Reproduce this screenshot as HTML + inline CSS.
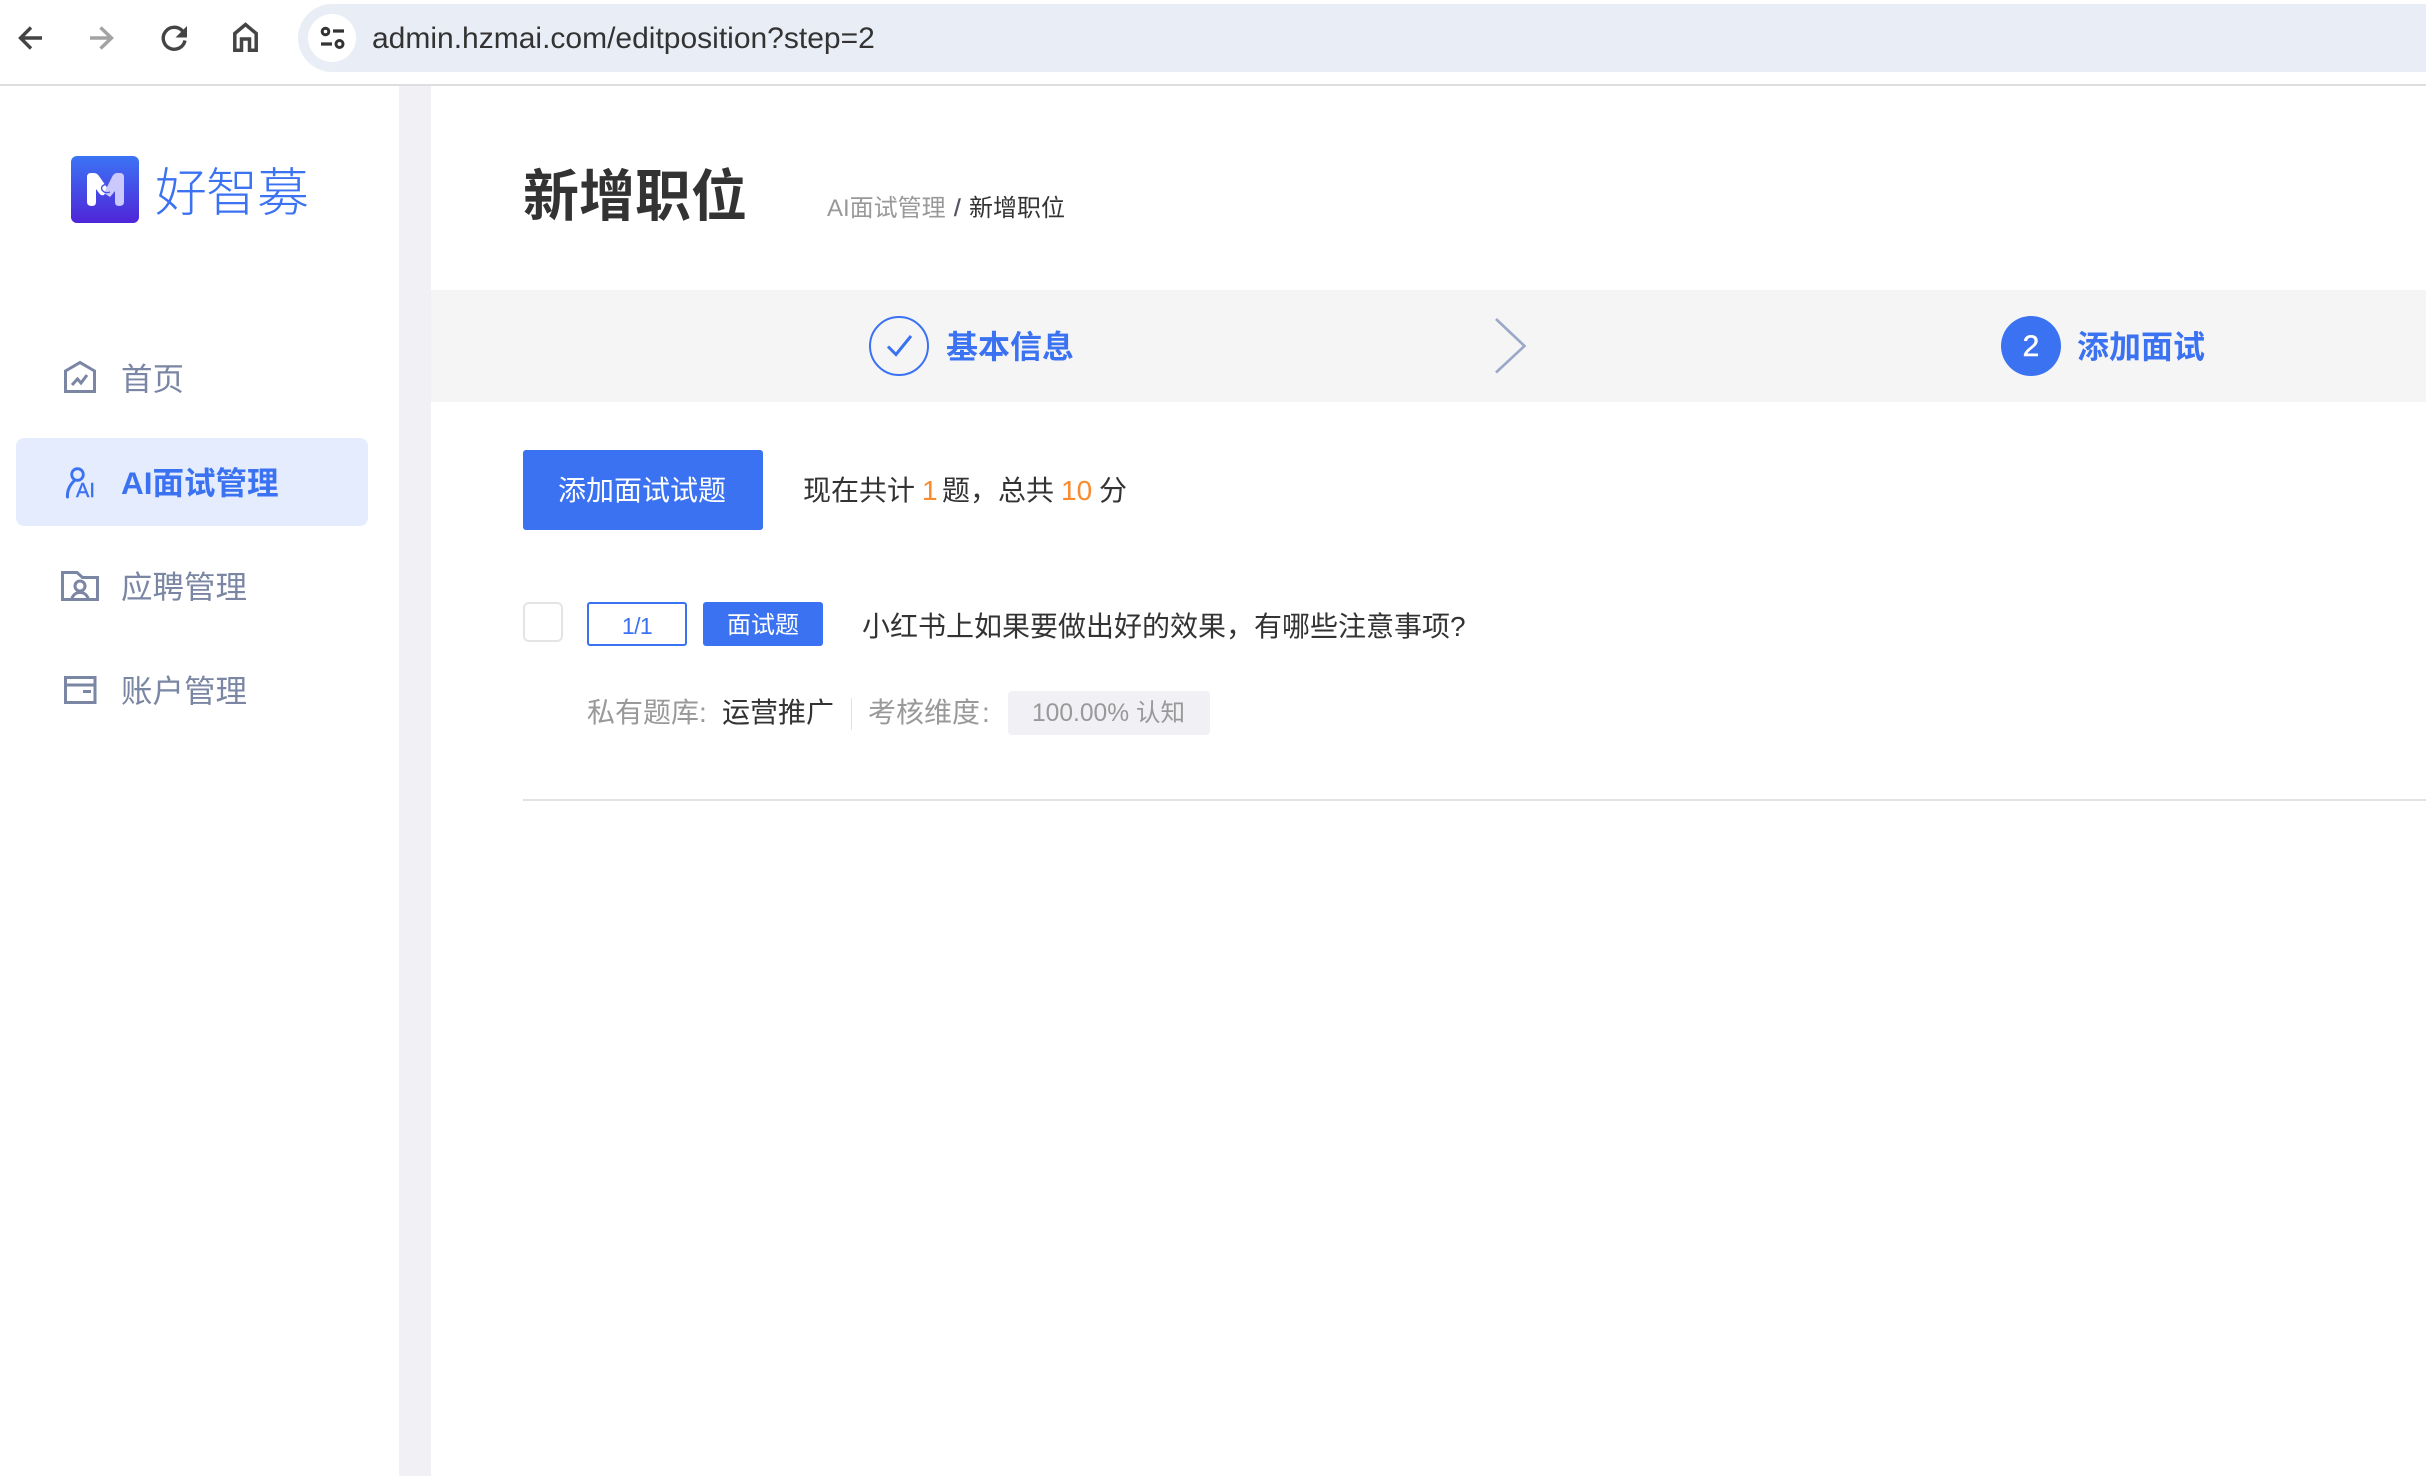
<!DOCTYPE html>
<html lang="zh-CN">
<head>
<meta charset="utf-8">
<title>新增职位</title>
<style>
html,body{margin:0;padding:0;width:2426px;height:1476px;overflow:hidden;background:#fff}
body{position:relative;font-family:"Liberation Sans","Noto Sans CJK SC",sans-serif;color:#333}
.b{position:absolute}
.t{position:absolute;white-space:nowrap;line-height:1}
svg{position:absolute;left:0;top:0}
</style>
</head>
<body>
<!-- browser chrome -->
<div class="b" style="left:298px;top:4px;width:2200px;height:68px;border-radius:34px;background:#e9edf6"></div>
<div class="b" style="left:308px;top:14px;width:48px;height:48px;border-radius:50%;background:#fff"></div>
<div class="b" style="left:0;top:84px;width:2426px;height:2px;background:#dedede"></div>
<div class="t" style="left:372px;top:24px;font-size:30px;color:#333">admin.hzmai.com/editposition?step=2</div>

<!-- layout -->
<div class="b" style="left:399px;top:86px;width:32px;height:1390px;background:#f0f0f5"></div>

<!-- logo -->
<div class="b" style="left:71px;top:156px;width:68px;height:67px;border-radius:6px;background:linear-gradient(180deg,#3b74f5,#4f25d8)"></div>
<div class="t" style="left:155px;top:168px;font-size:52px;color:#3b72f2;letter-spacing:-1px;font-weight:300">好智募</div>

<!-- menu -->
<div class="b" style="left:16px;top:438px;width:352px;height:88px;border-radius:8px;background:#e5ecfd"></div>
<div class="t" style="left:121px;top:364px;font-size:31.5px;color:#7a86a3">首页</div>
<div class="t" style="left:121px;top:468px;font-size:31.5px;color:#3b72f2;font-weight:700">AI面试管理</div>
<div class="t" style="left:121px;top:572px;font-size:31.5px;color:#7a86a3">应聘管理</div>
<div class="t" style="left:121px;top:676px;font-size:31.5px;color:#7a86a3">账户管理</div>

<!-- header -->
<div class="t" style="left:523px;top:169px;font-size:56px;font-weight:700;color:#333">新增职位</div>
<div class="t" style="left:827px;top:197px;font-size:24px;color:#999">AI面试管理</div>
<div class="t" style="left:954px;top:197px;font-size:24px;color:#556;-webkit-text-stroke:.4px #556">/</div>
<div class="t" style="left:969px;top:197px;font-size:24px;color:#333">新增职位</div>

<!-- steps -->
<div class="b" style="left:431px;top:290px;width:1995px;height:112px;background:#f5f5f6"></div>
<div class="b" style="left:869px;top:316px;width:60px;height:60px;box-sizing:border-box;border:2px solid #3b72f2;border-radius:50%"></div>
<div class="t" style="left:946px;top:331px;font-size:32px;font-weight:700;color:#3b72f2">基本信息</div>
<div class="b" style="left:2001px;top:316px;width:60px;height:60px;border-radius:50%;background:#3b72f2"></div>
<div class="t" style="left:2001px;top:332px;width:60px;text-align:center;font-size:30px;color:#fff;-webkit-text-stroke:.5px #fff">2</div>
<div class="t" style="left:2077px;top:331px;font-size:32px;font-weight:700;color:#3b72f2">添加面试</div>

<!-- action row -->
<div class="b" style="left:523px;top:450px;width:240px;height:80px;border-radius:3px;background:#3b72f2"></div>
<div class="t" style="left:558px;top:477px;font-size:28px;color:#fff">添加面试试题</div>
<div class="t" style="left:803px;top:477px;font-size:28px">现在共计</div>
<div class="t" style="left:922px;top:477px;font-size:28px;color:#f98a2e">1</div>
<div class="t" style="left:942px;top:477px;font-size:28px">题，总共</div>
<div class="t" style="left:1061px;top:477px;font-size:28px;color:#f98a2e">10</div>
<div class="t" style="left:1099px;top:477px;font-size:28px">分</div>

<!-- question -->
<div class="b" style="left:523px;top:602px;width:40px;height:40px;box-sizing:border-box;border:2px solid #e4e4e4;border-radius:6px;background:#fff"></div>
<div class="b" style="left:587px;top:602px;width:100px;height:44px;box-sizing:border-box;border:2px solid #3b72f2;border-radius:3px"></div>
<div class="t" style="left:587px;top:615px;width:100px;text-align:center;font-size:23px;letter-spacing:-.6px;color:#3b72f2">1/1</div>
<div class="b" style="left:703px;top:602px;width:120px;height:44px;border-radius:3px;background:#3b72f2"></div>
<div class="t" style="left:727px;top:614px;font-size:24px;color:#fff">面试题</div>
<div class="t" style="left:862px;top:613px;font-size:28px;color:#333">小红书上如果要做出好的效果，有哪些注意事项?</div>

<div class="t" style="left:587px;top:699px;font-size:28px;color:#999">私有题库:</div>
<div class="t" style="left:722px;top:699px;font-size:28px;color:#333">运营推广</div>
<div class="b" style="left:851px;top:698px;width:1px;height:32px;background:#e2e2e2"></div>
<div class="t" style="left:868px;top:699px;font-size:28px;color:#999">考核维度<span style="margin-left:2px">:</span></div>
<div class="b" style="left:1008px;top:691px;width:202px;height:44px;border-radius:4px;background:#f0f0f5"></div>
<div class="t" style="left:1032px;top:702px;font-size:24.6px;color:#999">100.00% 认知</div>
<div class="b" style="left:523px;top:799px;width:1903px;height:2px;background:#e2e2e2"></div>

<!-- icons -->
<svg width="2426" height="1476" viewBox="0 0 2426 1476" fill="none">
  <!-- toolbar -->
  <g stroke-width="3.4">
    <path d="M42 38H22M31 27.5L20.5 38L31 48.5" stroke="#444"/>
    <path d="M90 38H111M100.5 27.5L111.5 38L100.5 48.5" stroke="#a3a3a3"/>
  </g>
  <path d="M182.5 31A11 11 0 1 0 185 40.5" stroke="#444" stroke-width="3.4"/>
  <path d="M187 26V37.5H175.5Z" fill="#444"/>
  <path d="M234.8 33.5L245.5 24.5L256.2 33.5V50.3H249.5V39H241.5V50.3H234.8Z" stroke="#444" stroke-width="3.5"/>
  <circle cx="325.5" cy="31.5" r="3.3" stroke="#333" stroke-width="3"/>
  <path d="M333 31H344M321 44H332" stroke="#333" stroke-width="3.2"/>
  <circle cx="339.5" cy="44" r="3.5" stroke="#333" stroke-width="3"/>

  <!-- logo M -->
  <path d="M91 173H94Q97 173 99 176L108 189L104 195Q101 196 99 193L96 189V202Q96 206 92 206Q87 206 87 202V177Q87 173 91 173Z" fill="#fff"/>
  <path d="M117 173H120Q124 173 124 177V202Q124 206 119 206Q115 206 115 202V191L110 197L104 193L112 177Q114 173 117 173Z" fill="#cbc8fb"/>
  <path d="M108 184Q100 185 102 190Q105 194 110 192" stroke="#4a55e6" stroke-width="1.4"/>

  <!-- menu icons -->
  <g stroke="#7a86a3" stroke-width="3">
    <path d="M65.5 391.5V371L80 362.5L94.5 371V391.5Z"/>
    <path d="M72 385L77.5 379L81 383L87 375"/>
    <path d="M62.5 599.5V572.5H77L82.5 577.5H97.5V599.5Z"/>
    <circle cx="80" cy="586" r="5"/>
    <path d="M71.5 600C72.5 595 76 592.5 80 592.5C84 592.5 87.5 595 88.5 600"/>
    <rect x="65.5" y="677.5" width="29.5" height="25"/>
    <path d="M65 685H95.5M83 691.5H91"/>
  </g>
  <circle cx="77.5" cy="474.5" r="5.8" stroke="#3b72f2" stroke-width="2.8"/>
  <path d="M67.5 497C67 490 70 485 74 481" stroke="#3b72f2" stroke-width="3" stroke-linecap="round"/>
  <text x="76" y="497" font-size="20" fill="#3b72f2" stroke="#3b72f2" stroke-width=".4" font-family="Liberation Sans, sans-serif">AI</text>

  <!-- step check + chevron -->
  <path d="M888 346.5L896 354.5L911 336" stroke="#3b72f2" stroke-width="3"/>
  <path d="M1496 319L1524.5 346L1496 372.5" stroke="#9aa8c8" stroke-width="2.6"/>
</svg>
</body>
</html>
